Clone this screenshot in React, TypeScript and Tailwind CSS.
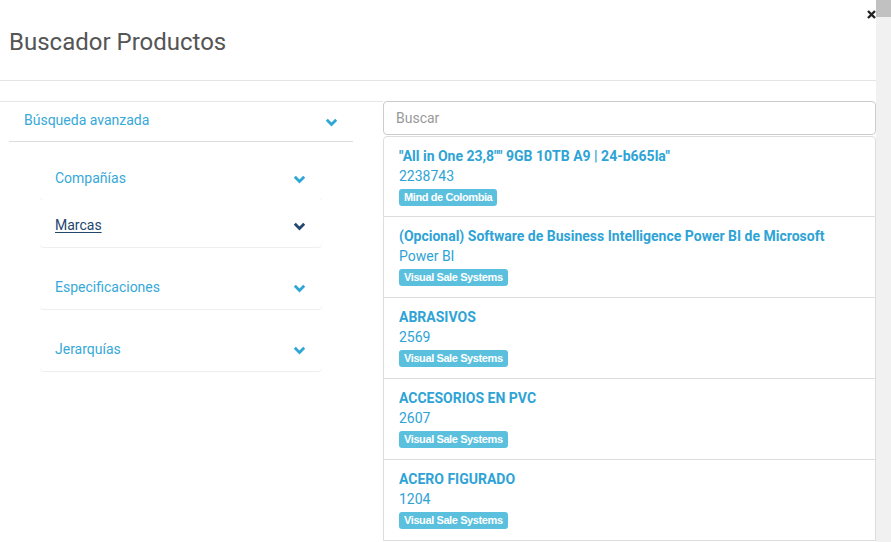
import React from 'react';

const Chevron = ({ className = '' }: { className?: string }) => (
  <svg width="13" height="9" viewBox="0 0 13 9" className={className}>
    <polyline points="1.8,1.8 6.5,6.5 11.2,1.8" fill="none" stroke="currentColor" strokeWidth="2.8" />
  </svg>
);

const filters = [
  { label: 'Compañías', gap: false, active: false },
  { label: 'Marcas', gap: false, active: true },
  { label: 'Especificaciones', gap: true, active: false },
  { label: 'Jerarquías', gap: true, active: false },
];

const products = [
  { name: '"All in One 23,8"" 9GB 10TB A9 | 24-b665la"', code: '2238743', company: 'Mind de Colombia' },
  { name: '(Opcional) Software de Business Intelligence Power BI de Microsoft', code: 'Power BI', company: 'Visual Sale Systems' },
  { name: 'ABRASIVOS', code: '2569', company: 'Visual Sale Systems' },
  { name: 'ACCESORIOS EN PVC', code: '2607', company: 'Visual Sale Systems' },
  { name: 'ACERO FIGURADO', code: '1204', company: 'Visual Sale Systems' },
];

export default function App() {
  return (
    <div className="flex h-[542px] w-full overflow-hidden bg-white font-['Roboto',sans-serif]">
      <div className="relative flex-1">
        {/* Header */}
        <div className="flex h-[81px] items-center border-b border-[#e5e5e5] pl-[9px]">
          <h4 className="text-[24px] text-[#555] leading-none pt-[4px]">Buscador Productos</h4>
        </div>
        <button className="absolute right-0 top-[10px] text-[#222]">
          <svg width="9" height="9" viewBox="0 0 9 9">
            <path d="M1 1 L8 8 M8 1 L1 8" stroke="currentColor" strokeWidth="2.4" />
          </svg>
        </button>

        {/* Body */}
        <div className="mt-[20px] flex">
          {/* Filters */}
          <div className="w-[383px] border-t border-[#e5e5e5]">
            <div className="w-[344px] ml-[9px]">
              <div className="flex h-[40px] items-center justify-between border-b border-[#ddd] pl-[15px] pr-[15px]">
                <span className="text-[14px] text-[#36a9d8] -mt-[2px]">Búsqueda avanzada</span>
                <Chevron className="text-[#2ea6d6] mt-[2px]" />
              </div>
              <div className="mx-[31px] mt-[11px]">
                {filters.map((f) => (
                  <div
                    key={f.label}
                    className={`flex h-[47px] items-center justify-between rounded-[4px] bg-white pl-[15px] pr-[16px] shadow-[0_1px_1px_rgba(0,0,0,0.07)] ${f.gap ? 'mt-[15px]' : ''}`}
                  >
                    <span className={`text-[14px] pt-[3px] ${f.active ? 'text-[#23466e] underline underline-offset-2' : 'text-[#36a9d8]'}`}>
                      {f.label}
                    </span>
                    <Chevron className={`mt-[5px] ${f.active ? 'text-[#23466e]' : 'text-[#2ea6d6]'}`} />
                  </div>
                ))}
              </div>
            </div>
          </div>

          {/* Results */}
          <div className="flex-1">
            <div className="flex h-[34px] items-center rounded-[4px] border border-[#ccc] px-[12px] text-[14px] text-[#999]">
              Buscar
            </div>
            <div className="mt-[1px]">
              {products.map((p, i) => (
                <div
                  key={p.name}
                  className={`h-[81px] border-x border-b border-[#ddd] pl-[15px] pt-[9px] ${i === 0 ? 'border-t rounded-t-[4px]' : ''}`}
                >
                  <div className="text-[14px] font-bold leading-[20px] text-[#2ea3d5]">{p.name}</div>
                  <div className="text-[14px] leading-[20px] text-[#2ea3d5]">{p.code}</div>
                  <div className="mt-[3px] w-fit rounded-[3px] bg-[#5bc0de] px-[5px] text-[11px] font-bold leading-[17px] tracking-[-0.4px] text-white font-['Liberation_Sans',sans-serif]">
                    {p.company}
                  </div>
                </div>
              ))}
            </div>
          </div>
        </div>
      </div>

      {/* Scrollbar */}
      <div className="w-[15px] bg-[#f1f1f1]">
        <div className="h-[17px] bg-[#c1c1c1]" />
      </div>
    </div>
  );
}
